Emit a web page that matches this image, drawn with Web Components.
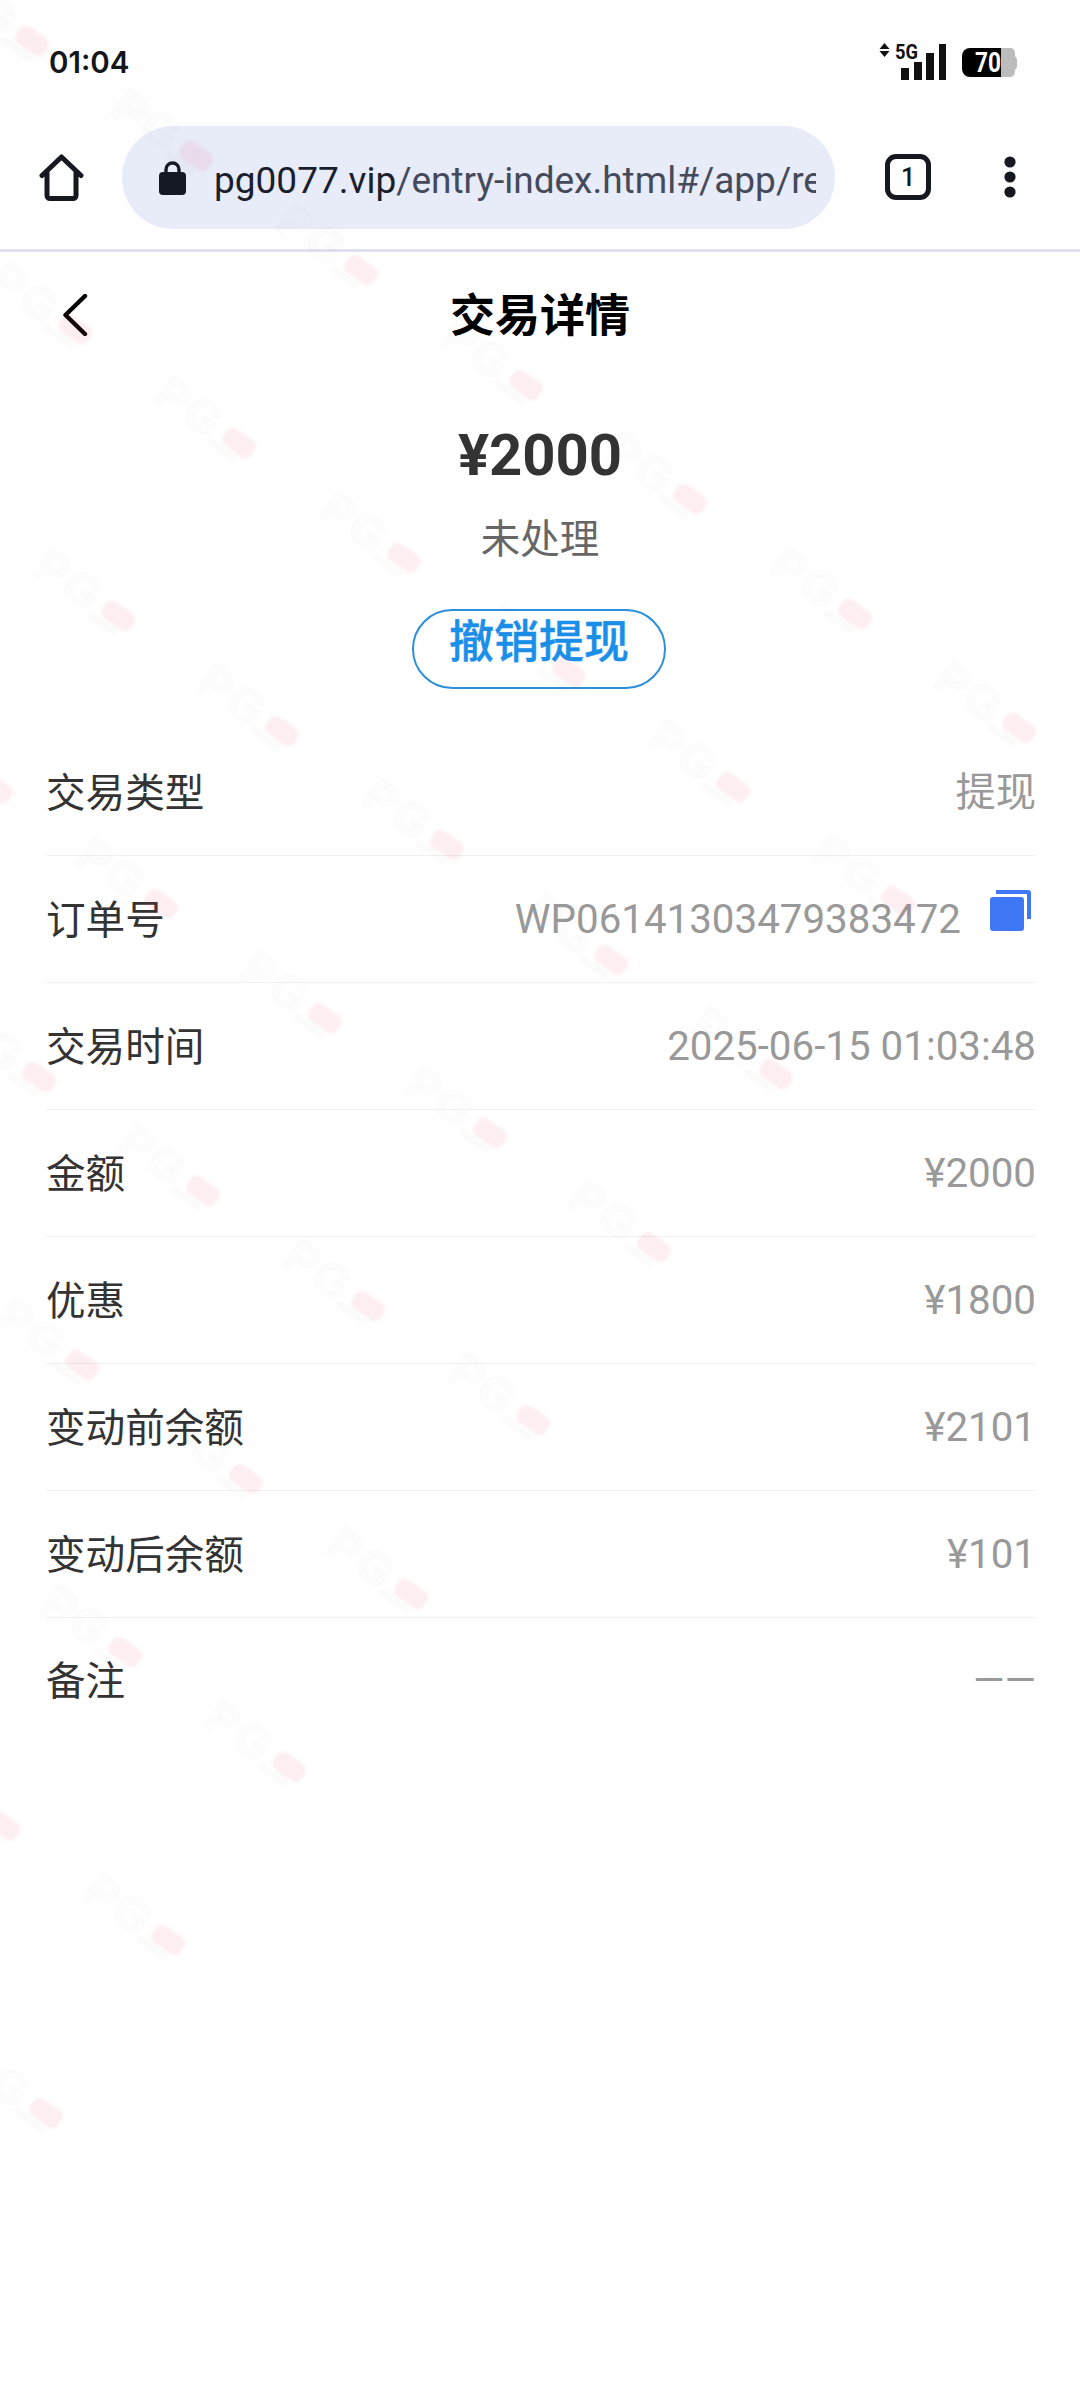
<!DOCTYPE html>
<html lang="zh">
<head>
<meta charset="utf-8">
<title>交易详情</title>
<style>
  html, body { margin: 0; background: #fff; }
  body { font-family: Roboto, "Noto Sans CJK SC", sans-serif; width: 1080px; min-height: 2400px; position: relative; overflow: hidden; }
</style>
</head>
<body>
<status-bar></status-bar>
<browser-bar host="pg0077.vip" path="/entry-index.html#/app/re"></browser-bar>
<page-header>交易详情</page-header>
<trade-summary amount="¥2000" state="未处理" action="撤销提现"></trade-summary>
<info-list>
  <info-row label="交易类型">提现</info-row>
  <info-row label="订单号">WP06141303479383472<copy-icon slot="extra"></copy-icon></info-row>
  <info-row label="交易时间">2025-06-15 01:03:48</info-row>
  <info-row label="金额">¥2000</info-row>
  <info-row label="优惠">¥1800</info-row>
  <info-row label="变动前余额">¥2101</info-row>
  <info-row label="变动后余额">¥101</info-row>
  <info-row label="备注" last>——</info-row>
</info-list>
<watermark-layer></watermark-layer>

<script>
class StatusBar extends HTMLElement {
    constructor() {
        super()
        this.attachShadow({ mode: "open" })
    }
    connectedCallback() {
        this.shadowRoot.innerHTML = `
        <style>
            :host { display: flex; height: 127px; box-sizing: border-box; padding: 42px 63px 0 49px; justify-content: space-between; align-items: flex-start; background: #fefefe; }
            .time { font: 600 29.5px/40px Inter, sans-serif; color: #15161a; }
            .right { display: flex; }
            svg { display: block; }
            text { font-family: Roboto, sans-serif; }
        </style>
        <div class="time">01:04</div>
        <div class="right">
            <svg width="138" height="40" viewBox="879 42 138 40">
                <path d="M884.5 43l5 6h-10zM884.5 57l5-6h-10z" fill="#111"/>
                <text x="895" y="59" font-size="21" font-weight="700" fill="#111" textLength="23" lengthAdjust="spacingAndGlyphs">5G</text>
                <rect x="901" y="68" width="8" height="12" fill="#111"/>
                <rect x="914" y="62" width="8" height="18" fill="#111"/>
                <rect x="926" y="53" width="8" height="27" fill="#111"/>
                <rect x="939" y="44" width="7" height="36" fill="#111"/>
                <path d="M998 48h12a5 5 0 0 1 5 5v3l2 3v8l-2 3v2a5 5 0 0 1-5 5h-12z" fill="#bcbcbc"/>
                <path d="M970 48h31v29h-31a8 8 0 0 1-8-8v-13a8 8 0 0 1 8-8z" fill="#000"/>
                <text x="975" y="72" font-size="28" font-weight="700" fill="#fff" textLength="26" lengthAdjust="spacingAndGlyphs">70</text>
            </svg>
        </div>`
    }
}

class BrowserBar extends HTMLElement {
    constructor() {
        super()
        this.attachShadow({ mode: "open" })
    }
    connectedCallback() {
        const host = this.getAttribute("host")
        const path = this.getAttribute("path")
        this.shadowRoot.innerHTML = `
        <style>
            :host { display: flex; align-items: center; box-sizing: border-box; height: 125px; padding: 0 0 22px 39px; border-bottom: 3px solid #dfe0f0; background: #fefefe; }
            svg { display: block; flex: none; }
            .pill { margin-left: 38px; width: 713px; height: 103px; box-sizing: border-box; padding: 0 19px 0 37px; border-radius: 52px; background: #e8ebf8; display: flex; align-items: center; }
            .url { margin: 8px 0 0 28px; flex: 1; min-width: 0; overflow: hidden; white-space: nowrap; font: 400 37px/50px Roboto, sans-serif; color: #454a5b; }
            .url b { font-weight: 400; color: #1b1f2d; }
            .tabs { margin-left: 50px; width: 46px; height: 46px; box-sizing: border-box; border: 5px solid #16181f; border-radius: 11px; display: flex; align-items: center; justify-content: center; font: 500 25px/1 Roboto, sans-serif; color: #16181f; }
            .dots { margin-left: 73px; }
        </style>
        <svg width="45" height="47" viewBox="0 0 45 47"><path d="M3 21.5 22.5 3 42 21.5M8 18v23.5a3 3 0 0 0 3 3h23a3 3 0 0 0 3-3V18" fill="none" stroke="#16181f" stroke-width="5" stroke-linecap="round" stroke-linejoin="round"/></svg>
        <div class="pill">
            <svg width="27" height="35" viewBox="0 0 27 35"><path d="M7 14V9.5a6.5 6.5 0 0 1 13 0V14" fill="none" stroke="#151926" stroke-width="3.4"/><rect x="0" y="12" width="27" height="23" rx="4" fill="#151926"/></svg>
            <div class="url"><b>${host}</b>${path}</div>
        </div>
        <div class="tabs">1</div>
        <svg class="dots" width="12" height="42" viewBox="0 0 12 42"><circle cx="6" cy="6" r="5.6" fill="#16181f"/><circle cx="6" cy="21" r="5.6" fill="#16181f"/><circle cx="6" cy="36" r="5.6" fill="#16181f"/></svg>`
    }
}

class PageHeader extends HTMLElement {
    constructor() {
        super()
        this.attachShadow({ mode: "open" })
    }
    connectedCallback() {
        this.shadowRoot.innerHTML = `
        <style>
            :host { display: grid; grid-template-columns: 110px 1fr 110px; align-items: center; height: 126px; font: 700 45px/60px "Noto Sans CJK SC", sans-serif; color: #000; }
            svg { display: block; margin-left: 62px; stroke-width: 4.4; }
            .title { text-align: center; margin-top: -5px; }
        </style>
        <svg width="26" height="42" viewBox="0 0 26 42"><path d="M23 2 3.5 21 23 40" fill="none" stroke="#000" stroke-linecap="round" stroke-linejoin="round"/></svg>
        <div class="title"><slot></slot></div>
        <span></span>`
    }
}

class TradeSummary extends HTMLElement {
    constructor() {
        super()
        this.attachShadow({ mode: "open" })
    }
    connectedCallback() {
        this.shadowRoot.innerHTML = `
        <style>
            :host { display: flex; flex-direction: column; align-items: center; padding-top: 47px; height: 351px; box-sizing: border-box; }
            .amount { font: 700 58px/60px Roboto, sans-serif; color: #333; }
            .state { margin-top: 26px; font: 400 39.5px/50px "Noto Sans CJK SC", sans-serif; color: #666; }
            .btn { margin: 48px 2px 0 0; width: 254px; height: 80px; box-sizing: border-box; border: 2px solid #2b8fdc; border-radius: 40px; text-align: center; font: 500 45px/56px "Noto Sans CJK SC", sans-serif; color: #1a8fe9; -webkit-text-stroke: .4px #1a8fe9; }
        </style>
        <div class="amount">${this.getAttribute("amount")}</div>
        <div class="state">${this.getAttribute("state")}</div>
        <div class="btn">${this.getAttribute("action")}</div>`
    }
}

class InfoList extends HTMLElement {
    constructor() {
        super()
        this.attachShadow({ mode: "open" })
    }
    connectedCallback() {
        this.shadowRoot.innerHTML = `
        <style>:host { display: block; padding: 0 44px 0 46px; }</style>
        <slot></slot>`
    }
}

class InfoRow extends HTMLElement {
    constructor() {
        super()
        this.attachShadow({ mode: "open" })
    }
    connectedCallback() {
        this.shadowRoot.innerHTML = `
        <style>
            :host { display: flex; align-items: center; justify-content: space-between; height: 127px; box-sizing: border-box; border-bottom: 1px solid #f1f1f2; }
            :host([last]) { border-bottom: 0; height: 123px; }
            .label { margin-top: -4px; font: 400 39.6px/50px "Noto Sans CJK SC", sans-serif; color: #333; }
            .value { margin-top: 2px; display: flex; align-items: center; font: 400 40.3px/50px Roboto, "Noto Sans CJK SC", sans-serif; color: #999; }
        </style>
        <div class="label">${this.getAttribute("label")}</div>
        <div class="value"><slot></slot><slot name="extra"></slot></div>`
    }
}

class CopyIcon extends HTMLElement {
    constructor() {
        super()
        this.attachShadow({ mode: "open" })
    }
    connectedCallback() {
        this.shadowRoot.innerHTML = `
        <style>
            :host { display: block; margin: -20px 5px 0 29px; }
            svg { display: block; }
        </style>
        <svg width="41" height="41" viewBox="0 0 41 41">
            <path d="M6 2h32a1 1 0 0 1 1 1v26" fill="none" stroke="#3f78f5" stroke-width="4"/>
            <rect x="0" y="7" width="34" height="34" rx="3" fill="#3f78f5"/>
        </svg>`
    }
}

// the faint PG stamps repeat on a skewed lattice, only i<=4 / j>=0 are on the page
class WatermarkLayer extends HTMLElement {
    constructor() {
        super()
        this.attachShadow({ mode: "open" })
    }
    connectedCallback() {
        let marks = ""
        for (let j = 0; j < 10; j++) {
            for (let i = -3; i <= 4; i++) {
                const x = Math.round(361 + i * 164.6 - j * 121.7)
                const y = Math.round(270 + i * 114.5 + j * 173.1)
                if (x < -20 || x > 1120 || y < 0 || y > 2400) continue
                marks += `<div class="mark" style="left:${x}px;top:${y}px"><span class="pg">PG</span><i class="blob"></i><i class="tag"></i></div>`
            }
        }
        this.shadowRoot.innerHTML = `
        <style>
            :host { display: block; position: absolute; inset: 0; overflow: hidden; pointer-events: none; }
            .mark { position: absolute; width: 0; height: 0; transform: rotate(35deg); }
            .pg { position: absolute; left: -96px; top: -24px; font: 700 46px/46px "Liberation Sans", sans-serif; letter-spacing: 3px; color: rgba(0,0,0,.006); -webkit-text-stroke: 2px rgba(0,0,0,.018); filter: blur(.8px); }
            .blob { position: absolute; left: -17px; top: -10px; width: 34px; height: 20px; border-radius: 7px; background: rgba(230,70,100,.09); filter: blur(1.5px); }
            .tag { position: absolute; left: -26px; top: 12px; width: 34px; height: 7px; background: rgba(0,0,0,.014); filter: blur(1px); }
        </style>
        ${marks}`
    }
}

customElements.define("status-bar", StatusBar)
customElements.define("browser-bar", BrowserBar)
customElements.define("page-header", PageHeader)
customElements.define("trade-summary", TradeSummary)
customElements.define("info-list", InfoList)
customElements.define("info-row", InfoRow)
customElements.define("copy-icon", CopyIcon)
customElements.define("watermark-layer", WatermarkLayer)
</script>
</body>
</html>
